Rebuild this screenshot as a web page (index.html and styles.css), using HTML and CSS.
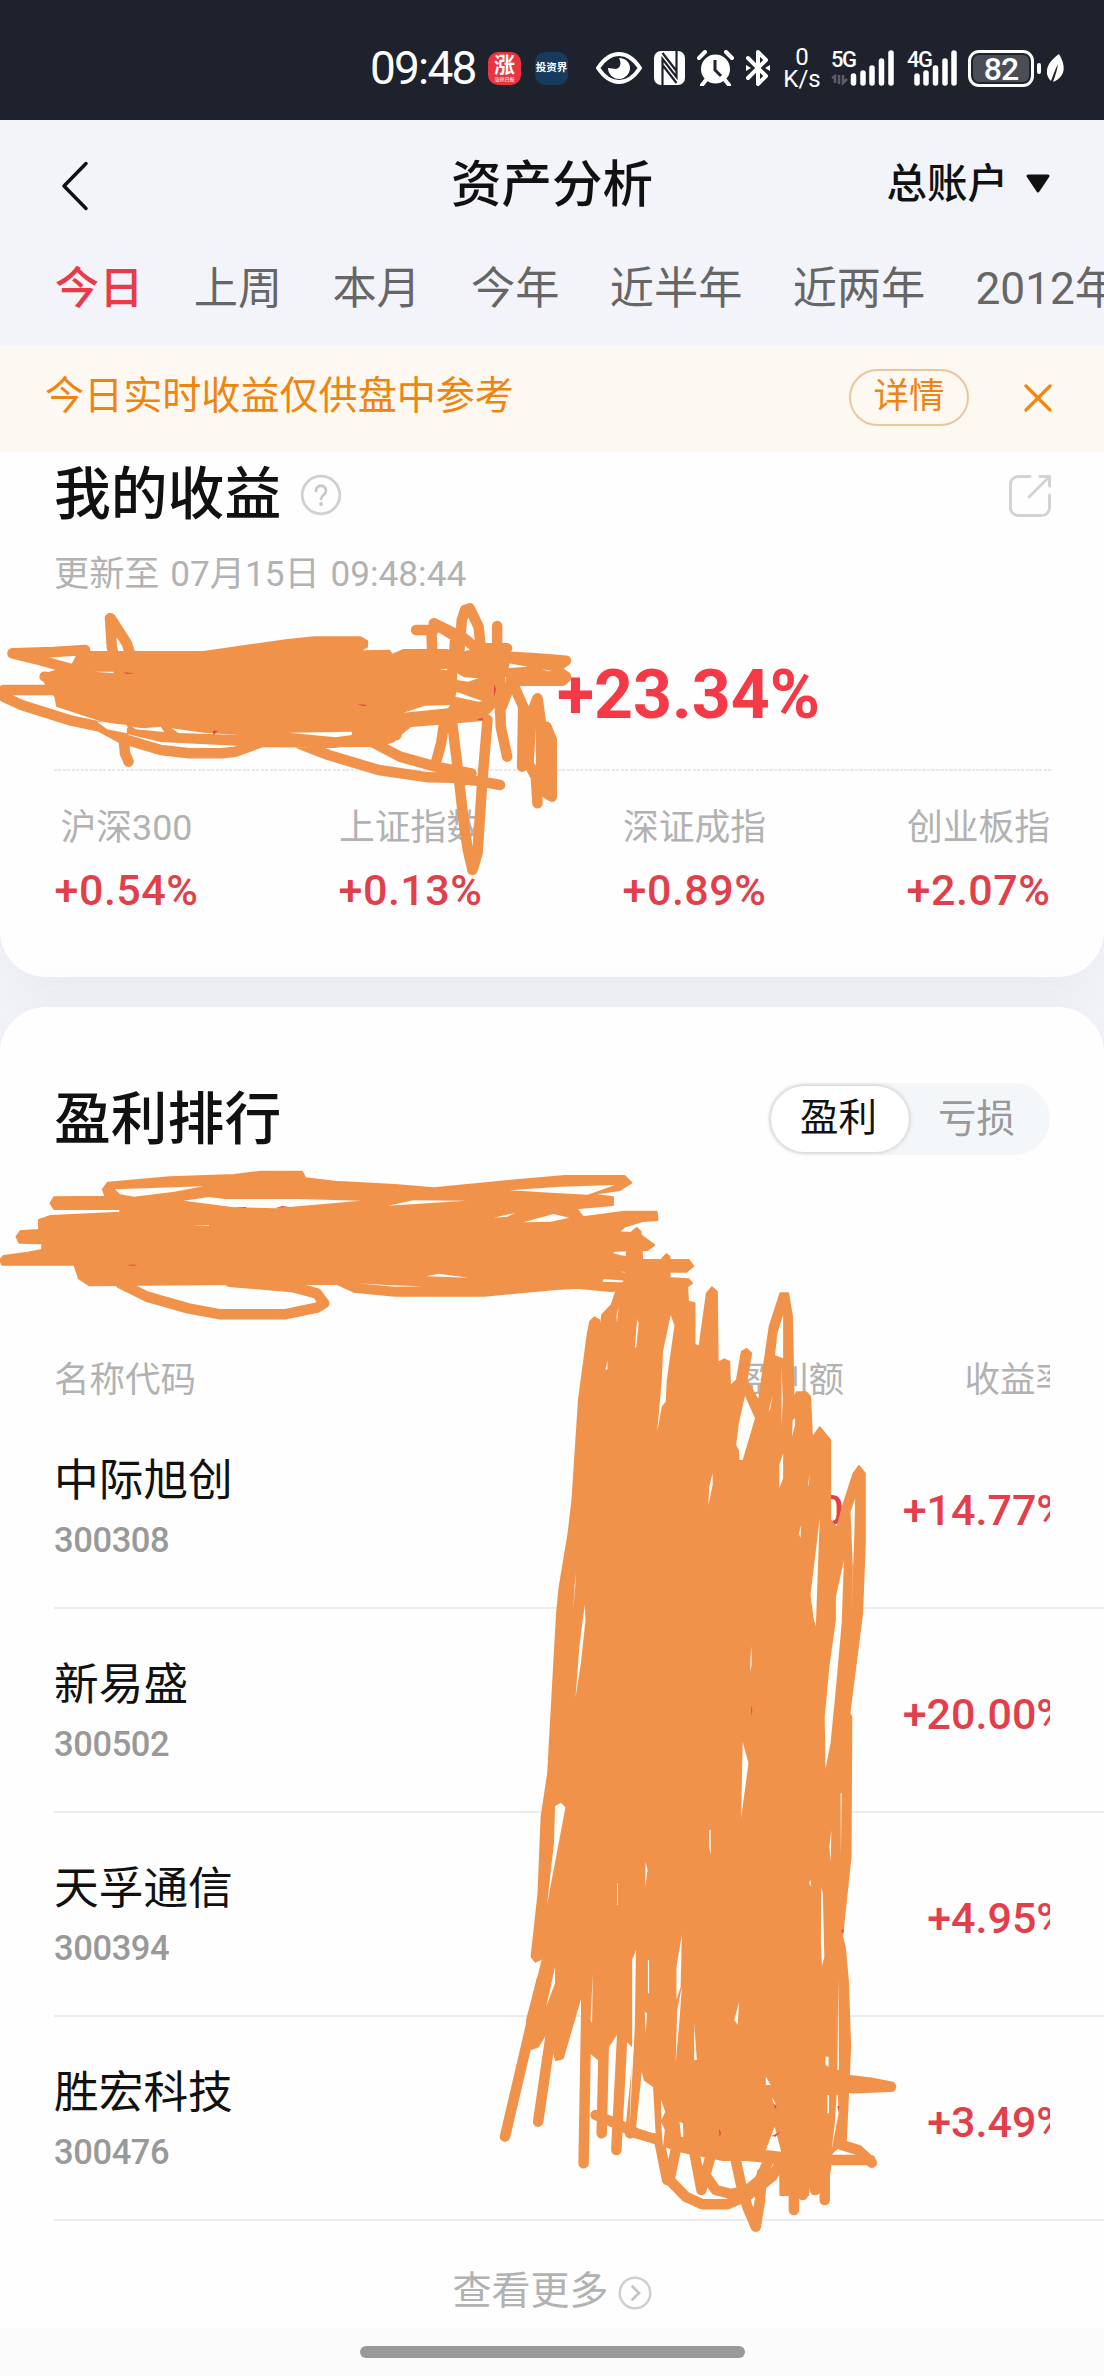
FILE: index.html
```html
<!DOCTYPE html>
<html lang="zh-CN">
<head>
<meta charset="utf-8">
<title>资产分析</title>
<link rel="stylesheet" href="styles.css">
</head>
<body>
<div class="screen">
  <div class="status">
    <span class="time">09:48</span>
    <span class="app app-red"><b>涨</b><i>涨停日报</i></span>
    <span class="app app-blue"><b>投资界</b></span>
    <svg class="ic-eye" width="46" height="34" viewBox="0 0 46 34"><path d="M2 17C8 8 15 3 23 3s15 5 21 14C38 26 31 31 23 31S8 26 2 17Z" fill="none" stroke="#fff" stroke-width="4" stroke-linejoin="round"/><path d="M23 7c6 0 11 4 11 10s-5 11-11 11-11-5-11-11l8 1c4-1 6-5 3-11Z" fill="#fff"/></svg>
    <svg class="ic-nfc" width="31" height="34" viewBox="0 0 31 34"><rect width="31" height="34" rx="7" fill="#fff"/><path d="M8.500 34V8l14 18V0M8.500 2l14 18M8.500 14l14 18" fill="none" stroke="#1e222c" stroke-width="2.200"/></svg>
    <svg class="ic-alarm" width="37" height="36" viewBox="0 0 37 36"><circle cx="18.500" cy="19" r="14.500" fill="#fff"/><path d="M2 8l6-6M35 8l-6-6M9 30l-4 5M28 30l4 5" stroke="#fff" stroke-width="4" stroke-linecap="round"/><path d="M18 10v10l6 6" fill="none" stroke="#1e222c" stroke-width="3"/></svg>
    <svg class="ic-bt" width="26" height="36" viewBox="0 0 26 36"><path d="M3 8l18 18-8 8V2l8 8L3 28" fill="none" stroke="#fff" stroke-width="4" stroke-linejoin="round" stroke-linecap="round"/><path d="M1 15l5 3-5 3zM25 15l-5 3 5 3z" fill="#fff"/></svg>
    <span class="speed"><span>0</span><span>K/s</span></span>
    <span class="signal"><em>5G</em><svg width="63" height="36" viewBox="0 0 63 36"><path d="M4 33V26l-3 2M8 25v9M12 25v8l4-4" stroke="#5b5e66" stroke-width="2.500" fill="none"/><path d="M22.500 26v7M32 23v10M41 18v15M50.500 11v22M60 3v30" stroke="#fff" stroke-width="5.500" stroke-linecap="round"/></svg></span>
    <span class="signal signal-4g"><em>4G</em><svg width="50" height="36" viewBox="0 0 50 36"><path d="M10 26v7M19 23v10M28.500 18v15M38 11v22M47 3v30" stroke="#fff" stroke-width="5.500" stroke-linecap="round"/></svg></span>
    <span class="battery">82</span>
    <span class="nub"></span>
    <svg class="ic-leaf" width="18" height="28" viewBox="0 0 18 28"><path d="M12 0C4 6-1 12 0 20c1 4 3 6 4 7C6 21 8 16 11 10 10 17 8 22 6 28 16 24 21 15 12 0Z" fill="#fff"/></svg>
  </div>

  <header class="top">
    <div class="titlebar">
      <svg class="back" width="30" height="50" viewBox="0 0 30 50"><path d="M26 2.500L4 25l22 22.500" fill="none" stroke="#111" stroke-width="3.500" stroke-linecap="round" stroke-linejoin="round"/></svg>
      <h1>资产分析</h1>
      <div class="account">总账户<svg width="26" height="20" viewBox="0 0 26 20"><path d="M3 2h20L13 17Z" fill="#111" stroke="#111" stroke-width="3" stroke-linejoin="round"/></svg></div>
    </div>
    <nav class="tabs"><span class="on">今日</span><span>上周</span><span>本月</span><span>今年</span><span>近半年</span><span>近两年</span><span>2012年</span></nav>
  </header>

  <div class="notice">
    <span class="notice-text">今日实时收益仅供盘中参考</span>
    <span class="detail">详情</span>
    <svg width="28" height="28" viewBox="0 0 28 28"><path d="M2 2l24 24M26 2L2 26" stroke="#f0870f" stroke-width="3.200" stroke-linecap="round"/></svg>
  </div>

  <section class="card earnings">
    <div class="card-head">
      <h2>我的收益</h2>
      <svg class="help" width="42" height="42" viewBox="0 0 42 42"><circle cx="21" cy="21" r="18.800" fill="none" stroke="#d0d0d0" stroke-width="2.800"/><path d="M16 17c0-7 10-7 10 0 0 4-5 4-5 8" fill="none" stroke="#c8c8c8" stroke-width="2.800" stroke-linecap="round"/><circle cx="21" cy="30" r="1.900" fill="#c8c8c8"/></svg>
      <svg class="share" width="42" height="42" viewBox="0 0 42 42"><path d="M21 1.500H9A7.500 7.500 0 0 0 1.500 9v24A7.500 7.500 0 0 0 9 40.500h24a7.500 7.500 0 0 0 7.500-7.500V20M31 1.500h9.500V11M40 2L20 22" fill="none" stroke="#d3d3d3" stroke-width="3" stroke-linecap="round" stroke-linejoin="round"/></svg>
    </div>
    <p class="updated">更新至 07月15日 09:48:44</p>
    <p class="rate">+23.34%</p>
    <div class="dashes"></div>
    <div class="indices">
      <div><span>沪深300</span><b>+0.54%</b></div>
      <div><span>上证指数</span><b>+0.13%</b></div>
      <div><span>深证成指</span><b>+0.89%</b></div>
      <div><span>创业板指</span><b>+2.07%</b></div>
    </div>
  </section>

  <section class="card ranking">
    <div class="rank-head">
      <h2>盈利排行</h2>
      <div class="toggle"><span class="on">盈利</span><span>亏损</span></div>
    </div>
    <div class="row table-head"><div class="name">名称代码</div><div class="profit">盈利额</div><div class="yield"><span>收益率</span></div></div>
    <div class="row"><div class="name"><b>中际旭创</b><i>300308</i></div><div class="profit">0</div><div class="yield"><span>+14.77%</span></div></div>
    <div class="row"><div class="name"><b>新易盛</b><i>300502</i></div><div class="profit">0</div><div class="yield"><span>+20.00%</span></div></div>
    <div class="row"><div class="name"><b>天孚通信</b><i>300394</i></div><div class="profit"></div><div class="yield"><span>+4.95%</span></div></div>
    <div class="row"><div class="name"><b>胜宏科技</b><i>300476</i></div><div class="profit"></div><div class="yield"><span>+3.49%</span></div></div>
    <div class="more">查看更多<svg width="34" height="34" viewBox="0 0 34 34"><circle cx="17" cy="17" r="15.300" fill="none" stroke="#cfcfcf" stroke-width="2.500"/><path d="M14.500 10.500L21 17l-6.500 6.500" fill="none" stroke="#c4c4c4" stroke-width="2.600" stroke-linecap="round"/></svg></div>
  </section>

  <footer class="home"><span></span></footer>

  <!-- hand-drawn marker over the private amounts -->
  <svg class="marker" width="1104" height="2376" viewBox="0 0 1104 2376">
    <g transform="translate(0 440) scale(.35714 .33333)">
      <path class="fill" d="M217 645L245 636H570L700 616L800 601L880 592H1010L1028 603V620L1010 630L920 636L1090 632L1098 645L1130 630H1250L1290 640L1360 620L1430 640L1420 690L1385 740V800L1350 840L1250 850L1150 858L1125 880L1100 905L1060 918H730L660 900L500 885L380 862L280 840L160 798L155 770L130 735L115 705L200 680Z"/>
      <path class="line" d="M35 640L110 660L210 690M35 640L150 636L238 630M308 535L313 620L330 700M310 535L355 610L370 660M125 710L210 735M10 750H165M10 750V770L60 795L200 842L280 860L340 895L450 930L530 940H620L660 935L735 905M345 880L350 940L360 965M370 870L450 890L720 905L940 908L1110 885M840 912L920 945L1060 990L1200 1012L1270 1013L1350 1025L1400 1035M1040 905L1120 950L1220 980L1320 1000M1165 570H1215V550L1300 595L1350 640M1208 570L1210 630M1215 550L1275 590L1265 740M1285 650L1293 540L1302 510L1315 505L1340 560L1350 660M1392 558V640M1340 625H1420M1425 650L1500 655L1585 662L1560 680L1430 655M1425 700L1490 695L1540 712L1585 710L1550 685M1430 722H1575L1585 712M1440 740L1465 800L1462 980M1505 775L1488 820L1480 970L1500 1010L1505 1090M1505 775L1515 850L1515 1050M1530 860L1545 900V1070L1530 1060V900M1400 745L1402 860L1420 950M1430 730L1405 800M1245 840L1235 910L1220 970M1265 840L1280 970L1300 1160L1310 1230L1323 1290L1337 1240L1350 1030L1365 840M1400 640V820"/>
      <path class="gap" d="M1280 700L1300 712L1340 715L1310 725L1280 720ZM1278 755L1350 783L1340 785L1275 770ZM1130 818L1190 797L1260 795L1255 805ZM265 695H318V700ZM1230 689L1252 686V691ZM272 845L355 855V880L300 868ZM370 860L400 865L450 860L460 876L380 868ZM480 865L570 878L670 885L500 879ZM808 878L985 875V885L940 892Z"/>
      <path class="remnant" d="M345 697L376 700L355 702ZM595 872H611L598 885ZM1000 792L1030 795L1018 799ZM1383 732L1389 748L1383 772ZM1335 838L1352 833V842ZM1165 805L1197 795ZM228 799H240"/>
    </g>
    <g transform="translate(0 960) scale(.45914 .33333)">
      <path class="fill" d="M118 712L230 710L224 688L235 668L370 652L510 645L570 635H658L665 655L730 665L860 675L945 685L1090 665L1230 648H1360L1375 668L1350 690L1285 703L1335 712V735L1255 745L1270 772L1360 755H1430L1432 780L1400 783L1360 800L1350 812L1315 815L1390 820L1425 855L1410 870L1340 872L1328 880L1350 888L1400 900H1500L1510 918L1495 935H1400L1315 930L1400 950L1500 958L1507 970L1490 985L1330 993L1255 983L1205 988L1055 1007H860L770 995L735 972H500L195 976L172 955L162 914H5L0 900L8 888L60 878L92 870V850L42 848L36 830L45 813L85 810V780L110 768L262 758V747H118L110 730Z"/>
      <path class="line" d="M262 970L320 1010L410 1045L480 1063H620L690 1043L706 1030L690 1000L640 982L500 965"/>
      <path class="gap" d="M250 688L443 679L380 695L292 710L262 703ZM400 722L455 711L490 717H650L785 722L600 745L510 742ZM1110 691L1220 680L1340 675L1280 704L1200 698ZM845 737L900 721L1015 722ZM1140 787L1205 762L1240 773L1200 785ZM928 949L955 941L1020 953ZM778 970L850 976L920 979L860 980ZM1075 773L1122 759L1105 770ZM418 796H455V798ZM1315 957L1390 965L1380 968L1312 965Z"/>
      <path class="remnant" d="M600 744L615 738L632 742ZM510 741H536V744ZM275 914H300L290 918ZM965 772L978 768Z"/>
    </g>
    <g transform="translate(500 1200) scale(.38521 .33333)">
      <path class="fill" d="M245 352L234 365L228 400L205 600L188 900L178 1000L155 1160L148 1240L125 1720L108 1850L100 2080L82 2270L92 2285L105 2278L118 2245L98 2340L70 2460L74 2550L98 2540L125 2490L145 2580L163 2575L212 2380L216 2540L258 2580L306 2495L345 2540H354L376 2640L400 2660L408 2830L472 2855L578 2880L727 2880L728 2985H800L805 2920H855L861 2860L898 2820L909 2540L903 2340L895 2240L888 2210L910 1970L912 1550L907 1540L940 1240L947 1030V820L932 798L918 820L890 920L875 985L857 960V720L830 682L810 715L805 590L795 577H770L762 600L758 350L748 280H728L700 380L685 500L672 605L640 540L652 460L640 447L628 455L615 540L597 560L595 485L582 478L565 490L563 275L550 262L537 280L518 440L505 435V310L488 305L485 240H440V170L432 163L422 175L400 210L370 200L365 95L355 84L342 97L330 150L325 240L300 280L290 315L265 345L260 400L257 360Z"/>
      <path class="line" d="M108 2340L13 2810M140 2440L99 2765M225 2360L217 2890M270 2500L264 2800M318 2490L302 2850M362 2530L338 2800M248 2745L301 2770L354 2800L472 2840L578 2860L749 2880H962M965 2888L930 2850L887 2835M865 2635L962 2648L1015 2660L919 2665L855 2655M413 2820L434 2940M458 2840L440 2940L482 2990L525 3013H589L642 2988L706 2930L738 2870M505 2860L523 2970L546 2870M536 2930L560 2970L600 2982L642 2970L674 2940L706 2860M610 2870L625 2950L642 3020L664 3080L675 3000L680 2920M786 2890V2985M763 2980V3030M818 2900V2970M843 2880V3000"/>
      <path class="gap" d="M443 345L453 376L433 540L430 605L420 620L408 695L420 540L423 455ZM350 445L356 357L360 370L354 440ZM302 350L308 320L304 367ZM274 510L279 480V507ZM613 735L620 670L636 587L662 655L630 780H622L620 750ZM714 466L720 400L735 345V475ZM697 636L708 585L702 625ZM731 500L734 600L731 680ZM725 795L735 760V835L725 865ZM758 710L760 660L766 655V675ZM800 850L804 822L801 860ZM541 915L543 860L552 820V855ZM776 1000L782 975L780 1015ZM806 1185L830 955L820 1278L815 1260ZM872 1190L893 1080L887 1270L870 1490L858 1630L845 1707L843 1550L855 1400L872 1260ZM910 935L922 895L920 1000L912 1240L916 1100ZM190 1230L196 1120V1150ZM196 1493L206 1340L220 1215L222 1260L210 1390ZM650 1375L653 1338V1395L650 1415ZM630 1625L645 1690L626 1855ZM543 1890H547V1965L543 1940ZM143 1818L158 1808L170 1822L122 2115L140 1930ZM378 1985L383 2010L377 2060ZM304 2050H306V2115H304ZM834 2060L838 2080L842 2270L836 2298L833 2230ZM802 2048L807 2040V2060ZM458 2300L472 2205L469 2360L458 2400ZM343 2280L353 2250L350 2480L336 2790L343 2540ZM120 2420L143 2300V2350ZM241 2320L239 2470L235 2460ZM860 1890L859 1985L855 1940ZM884 1780H887L885 1970ZM878 2330L880 2610H876ZM384 2280H387V2380H384ZM376 2435L382 2440L378 2500ZM608 2460L621 2405L617 2475ZM472 2360L466 2460L456 2590L460 2430ZM504 2470L511 2580H504ZM690 2630L703 2655H690ZM706 2690L717 2715L710 2710ZM845 2570H853V2600L845 2595ZM850 2685H854V2740H850ZM874 2685H877L879 2740L861 2850L870 2760ZM418 2700L429 2735L419 2760ZM418 2765L428 2790L423 2840ZM466 2765L475 2770L476 2810H470ZM378 2650L397 2665L398 2800L360 2785L364 2710ZM713 2780L690 2850L730 2855Z"/>
      <path class="remnant" d="M712 2713L718 2718L714 2727ZM568 2785L574 2800L570 2810ZM705 2808L728 2795L715 2810ZM876 2718H881L878 2736ZM652 1515L655 1530L652 1550ZM887 2188H892V2198H887Z"/>
    </g>
  </svg>
</div>
</body>
</html>
```
FILE: styles.css
```css
* { box-sizing: border-box; margin: 0; padding: 0; }
body { font-family: Roboto, "Noto Sans CJK SC", sans-serif; color: #111; background: #f3f4f9; }
i, em { font-style: normal; }
svg { display: block; flex: none; }
.screen { position: relative; width: 1104px; height: 2376px; overflow: hidden; display: flex; flex-direction: column; }

.status { height: 120px; background: #1e222c; color: #fff; display: flex; align-items: center; padding: 16px 0 0 370px; flex: none; }
.time { width: 118px; font-size: 46px; line-height: 46px; letter-spacing: -1.800px; white-space: nowrap; font-weight: 400; }
.app { width: 33px; height: 33px; border-radius: 10px; display: flex; flex-direction: column; align-items: center; justify-content: center; overflow: hidden; flex: none; }
.app-red { background: #e93443; }
.app-red b { font-size: 21px; line-height: 21px; }
.app-red i { font-size: 5px; line-height: 6px; }
.app-blue { background: #163b5e; margin-left: 14px; }
.app-blue b { font-size: 10.500px; line-height: 14px; white-space: nowrap; }
.ic-eye { margin-left: 28px; }
.ic-nfc { margin-left: 12px; }
.ic-alarm { margin-left: 12px; }
.ic-bt { margin-left: 11px; }
.speed { width: 36px; margin-left: 13px; display: flex; flex-direction: column; align-items: center; font-size: 24px; line-height: 22px; font-weight: 400; }
.signal { width: 63px; margin-left: 11px; display: grid; flex: none; }
.signal > * { grid-area: 1 / 1; }
.signal em { font-size: 22px; line-height: 20px; letter-spacing: -1.500px; font-weight: 500; }
.signal-4g { width: 50px; margin-left: 13px; }
.battery { width: 66px; height: 37px; margin-left: 11px; border: 3px solid #fff; border-radius: 11px; background: #4b4e57; box-shadow: inset 0 0 0 2px #1e222c; font-size: 32px; line-height: 32px; text-align: center; font-weight: 500; letter-spacing: -1px; flex: none; }
.nub { width: 4px; height: 11px; border-radius: 2px; background: #fff; margin-left: 3px; }
.ic-leaf { margin-left: 6px; }

.top { height: 225px; background: #f3f4f9; flex: none; }
.titlebar { height: 128px; display: grid; grid-template-columns: 1fr auto 1fr; align-items: center; padding: 0 53px 0 60px; }
h1 { font-size: 50.500px; line-height: 60px; font-weight: 500; margin: 1px 7px 0 0; }
.back { margin-top: 4px; }
.account { justify-self: end; display: flex; align-items: center; gap: 17px; font-size: 40.500px; line-height: 56px; font-weight: 500; }
.tabs { display: flex; gap: 50.300px; padding-left: 55px; margin-top: 8px; font-size: 44.200px; line-height: 66px; color: #666; white-space: nowrap; }
.tabs .on { color: #e93a49; font-weight: 500; }

.notice { position: relative; z-index: 1; height: 107px; background: #fef8f3; display: flex; align-items: center; padding: 0 52px 2px 45px; color: #ee850f; flex: none; }
.notice-text { flex: 1; font-size: 39.100px; line-height: 58px; margin-top: -3px; }
.detail { width: 120px; height: 57px; border: 2px solid #eac69c; border-radius: 29px; font-size: 35.500px; line-height: 50px; text-align: center; margin-right: 55px; }

.card { background: #fefefe; flex: none; }
.card h2 { font-size: 56.800px; line-height: 70px; font-weight: 500; }
.earnings { height: 525px; border-radius: 0 0 46px 46px; padding: 8px 53px 0 54px; box-shadow: 0 4px 60px rgba(80, 90, 110, .07); }
.card-head { display: flex; align-items: center; }
.help { margin: 0 0 0 19px; }
.share { margin: 2px 0 0 auto; }
.updated { font-size: 35.200px; line-height: 50px; color: #b2b2b2; margin-top: 19px; white-space: nowrap; word-spacing: 2px; }
.rate { margin: 56px 0 0 503px; font-size: 68px; line-height: 80px; font-weight: 700; color: #f33a46; }
.dashes { height: 2px; margin-top: 34px; background: repeating-linear-gradient(90deg, #e8e8e8 0 3px, transparent 3px 4.500px); }
.indices { display: flex; justify-content: space-between; padding-top: 32px; }
.indices div { display: flex; flex-direction: column; align-items: center; width: 145px; white-space: nowrap; }
.indices span { font-size: 35.800px; line-height: 50px; color: #b2b2b2; }
.indices b { font-size: 43px; line-height: 50px; margin-top: 12px; color: #e23f4a; font-weight: 500; letter-spacing: .500px; }

.ranking { margin-top: 30px; height: 1321px; border-radius: 46px 46px 0 0; padding-left: 54px; box-shadow: 0 -4px 60px rgba(80, 90, 110, .04); }
.rank-head { display: flex; justify-content: space-between; align-items: center; padding: 75px 54px 0 0; }
.rank-head h2 { padding-top: 3px; }
.toggle { display: flex; align-items: center; width: 282px; height: 72px; padding: 3px; border-radius: 36px; background: #f3f7fa; font-size: 38.500px; line-height: 64px; color: #999; }
.toggle span { width: 139px; text-align: center; padding-right: 3px; }
.toggle .on { height: 66px; border-radius: 33px; background: #fff; color: #111; box-shadow: 0 0 5px rgba(0, 0, 0, .24); }
.row { display: flex; height: 204px; border-bottom: 2px solid #ededed; }
.name { flex: 1; display: flex; flex-direction: column; padding-top: 46px; }
.name b { font-size: 44.700px; line-height: 60px; font-weight: 400; }
.name i { font-size: 34.500px; line-height: 40px; margin-top: 9px; color: #999; font-weight: 500; letter-spacing: -.400px; }
.profit { width: 300px; text-align: right; font-size: 43px; line-height: 50px; padding-top: 80px; color: #e23f4a; font-weight: 500; }
.yield { width: 206px; margin-right: 54px; padding-top: 80px; display: flex; justify-content: flex-end; overflow: hidden; font-size: 43px; line-height: 50px; color: #e23f4a; font-weight: 500; white-space: nowrap; }
.yield span { margin-right: -18px; }
.row.table-head { height: 49px; margin-top: 201px; border: 0; }
.table-head > * { padding: 0; font-size: 35.500px; line-height: 49px; color: #b2b2b2; font-weight: 400; }
.table-head .yield span { margin-right: -21px; }
.more { display: flex; justify-content: center; align-items: center; gap: 9px; margin: 41px 54px 0 0; font-size: 39px; line-height: 58px; color: #b2b2b2; }
.more svg { margin-top: 4px; }

.home { height: 48px; background: #fbfbfb; display: flex; justify-content: center; padding-top: 18px; flex: none; }
.home span { width: 385px; height: 12px; border-radius: 6px; background: #999; }

.marker { position: absolute; left: 0; top: 0; }
.fill { fill: #f1924a; stroke: #f1924a; stroke-width: 2px; stroke-linejoin: round; vector-effect: non-scaling-stroke; }
.line { fill: none; stroke: #f1924a; stroke-width: 10.500px; stroke-linejoin: round; stroke-linecap: round; vector-effect: non-scaling-stroke; }
.gap { fill: #fffdf8; }
.remnant { fill: #e9434a; }
```
